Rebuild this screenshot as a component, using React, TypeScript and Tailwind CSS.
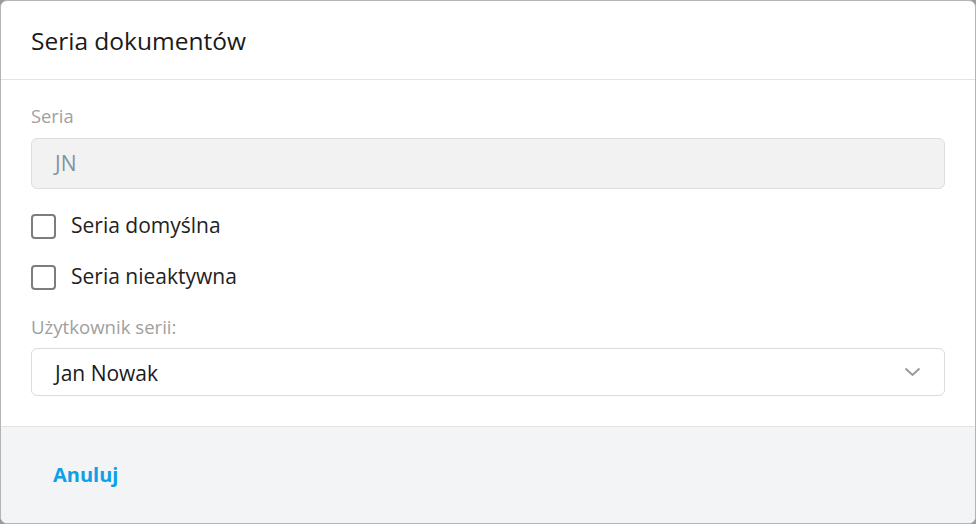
import React from "react";

export default function App() {
  return (
    <div
      className="w-[976px] h-[524px] bg-[#9a9a9a]"
      style={{ fontFamily: '"Open Sans", "Noto Sans", sans-serif' }}
    >
      <div className="w-full h-full rounded-[7px] border border-[#b4b4b4] bg-white overflow-hidden flex flex-col">
        <div className="h-[79px] flex items-center px-[30px] border-b border-[#e3e3e3] shrink-0">
          <h1 className="text-[24.5px] text-[#1a1a1a] leading-none pt-[2px]">Seria dokumentów</h1>
        </div>
        <div className="flex-1 px-[30px] pt-[25px] flex flex-col">
          <label className="text-[18.3px] text-[#a0a0a0] leading-[22px]">Seria</label>
          <div className="mt-[11px] h-[51px] rounded-[6px] border border-[#dedede] bg-[#f2f2f2] flex items-center px-[23px]">
            <span className="text-[21px] text-[#7f95a3]">JN</span>
          </div>
          <div className="mt-[25px] flex items-center gap-[15px] h-[24px]">
            <div className="w-[25px] h-[25px] rounded-[4px] border-2 border-[#7d7d7d] bg-white" />
            <span className="text-[21px] text-[#222]">Seria domyślna</span>
          </div>
          <div className="mt-[27px] flex items-center gap-[15px] h-[24px]">
            <div className="w-[25px] h-[25px] rounded-[4px] border-2 border-[#7d7d7d] bg-white" />
            <span className="text-[21px] text-[#222]">Seria nieaktywna</span>
          </div>
          <label className="mt-[27px] text-[18.6px] text-[#a0a0a0] leading-[22px]">Użytkownik serii:</label>
          <div className="mt-[10px] h-[48px] rounded-[6px] border border-[#dcdcdc] bg-white flex items-center justify-between pl-[23px] pr-[23px]">
            <span className="text-[21px] text-[#1a1a1a] pt-[3px]">Jan Nowak</span>
            <svg width="17" height="10" viewBox="0 0 17 10" fill="none">
              <path d="M1.5 1.5 L8.5 8 L15.5 1.5" stroke="#9a9a9a" strokeWidth="2" />
            </svg>
          </div>
        </div>
        <div className="h-[97px] shrink-0 bg-[#f3f4f6] border-t border-[#e3e3e3] flex items-center px-[52px]">
          <span className="text-[20px] font-bold text-[#0ea0e6]">Anuluj</span>
        </div>
      </div>
    </div>
  );
}
